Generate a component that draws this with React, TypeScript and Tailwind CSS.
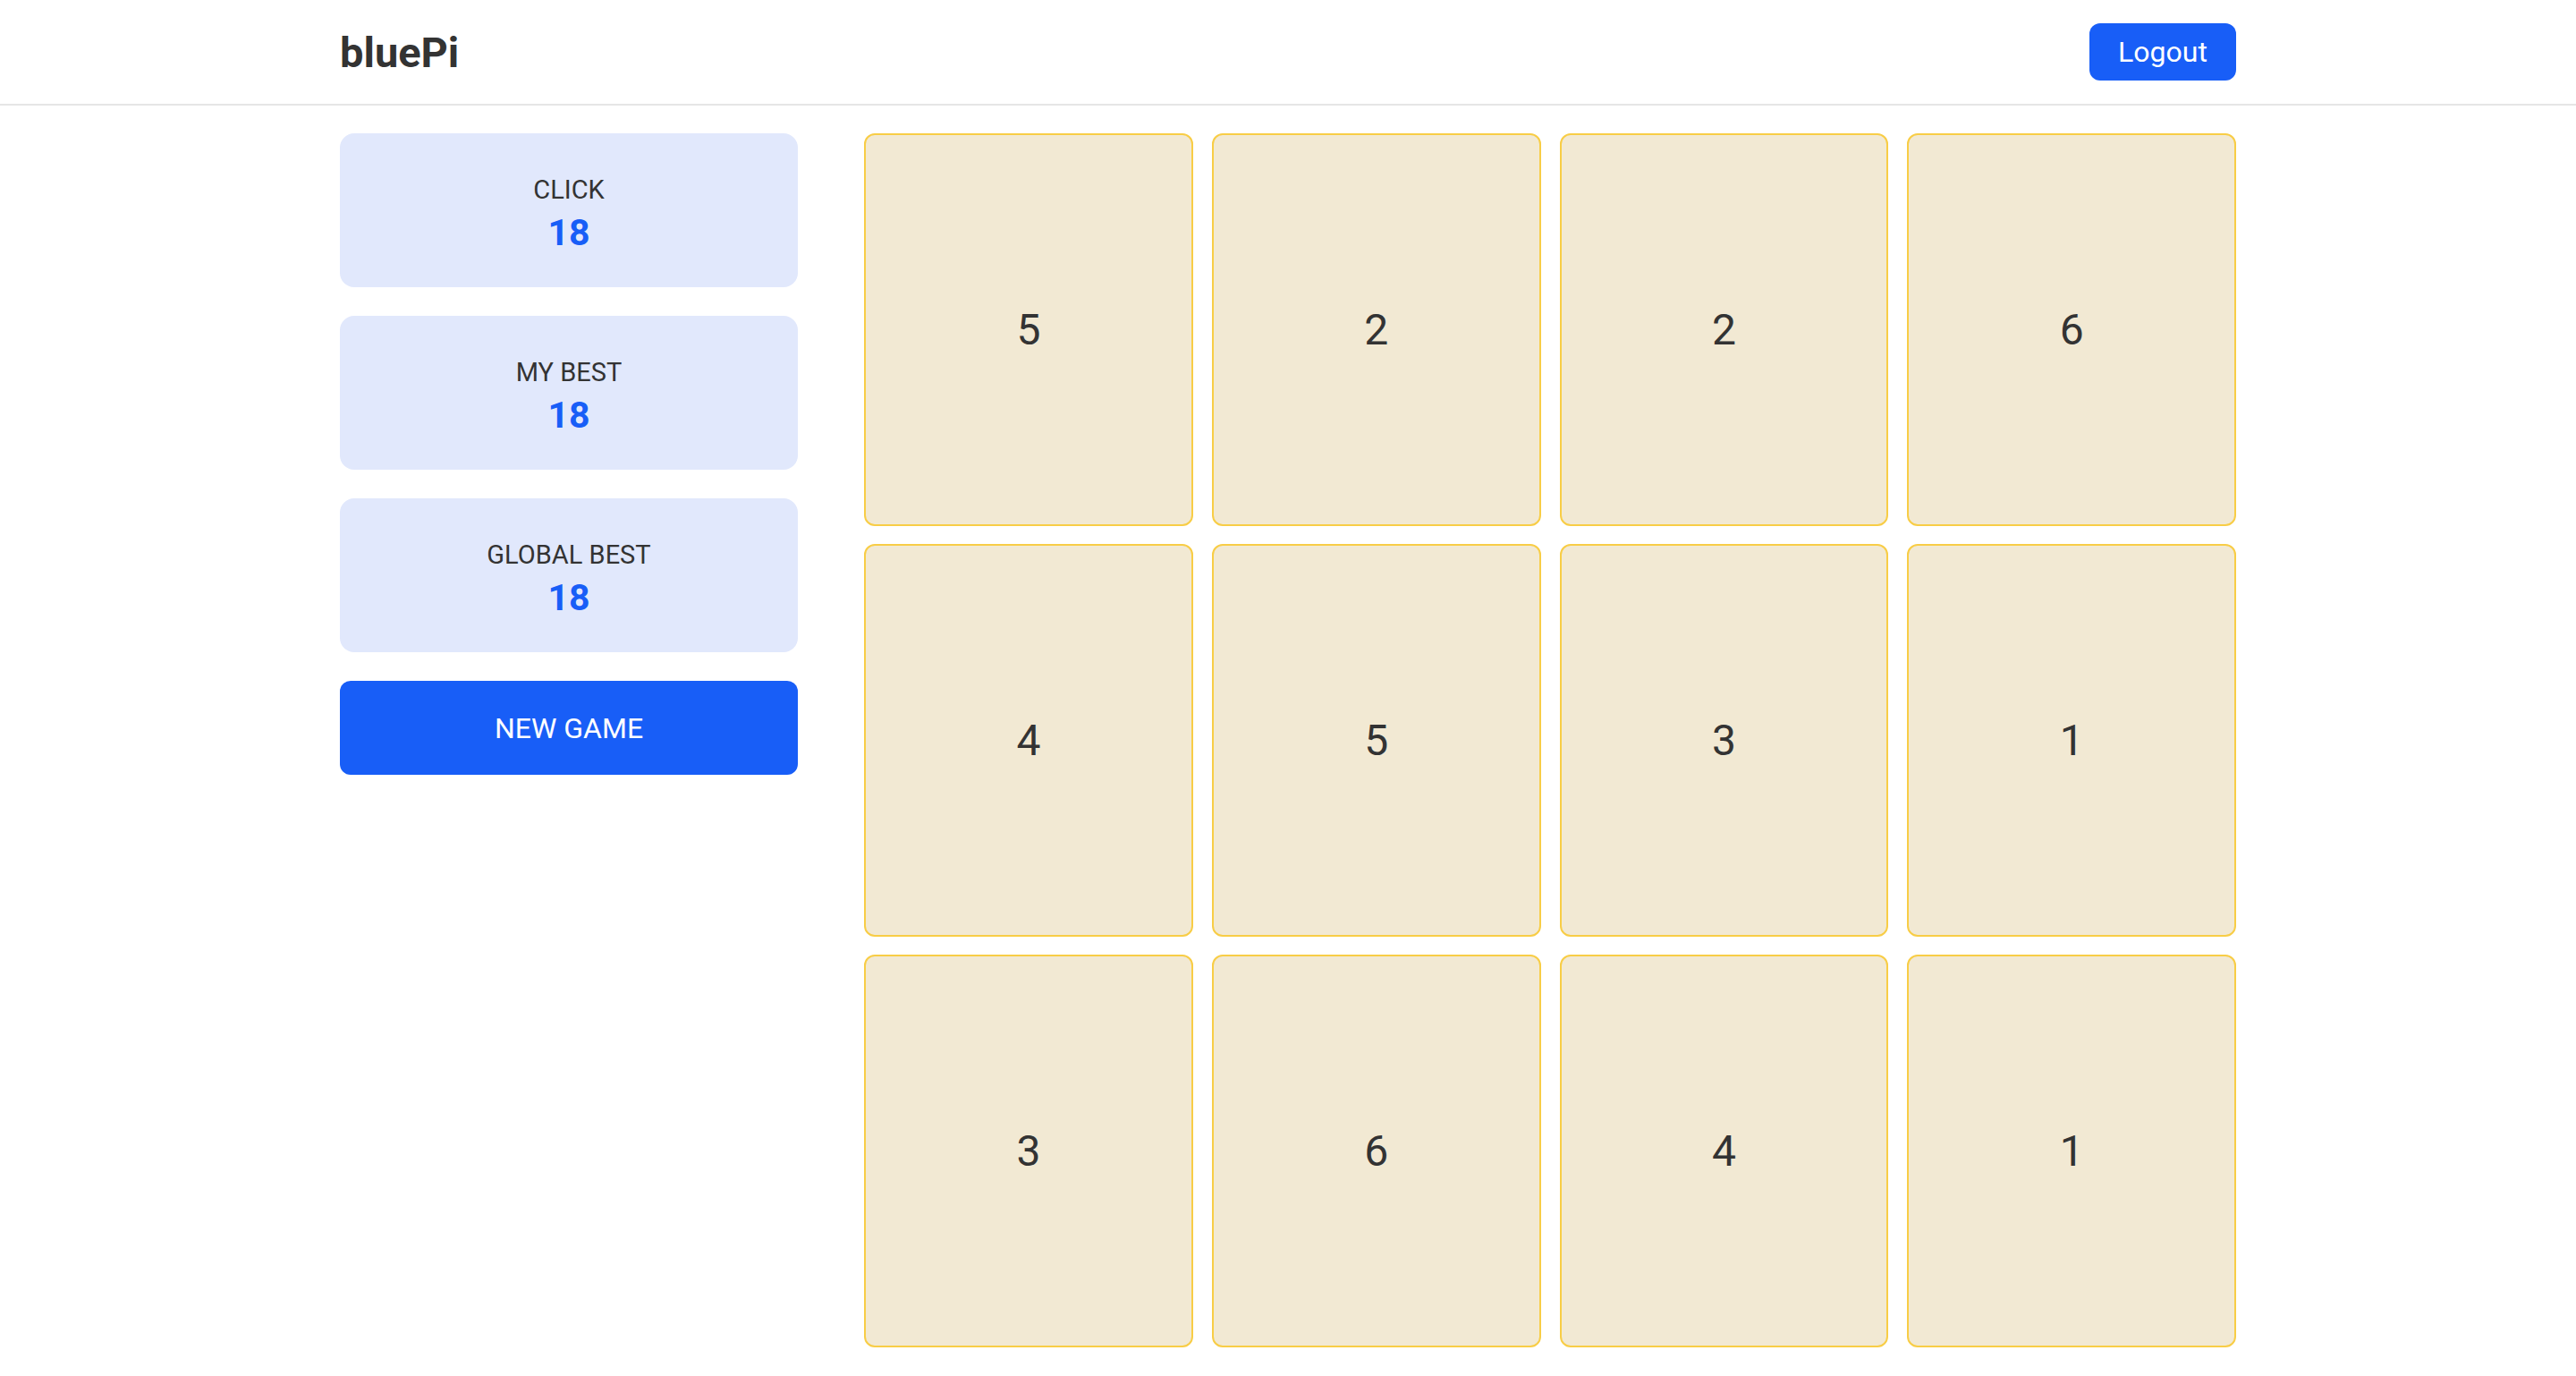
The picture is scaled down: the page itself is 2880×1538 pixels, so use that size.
const tiles = [5, 2, 2, 6, 4, 5, 3, 1, 3, 6, 4, 1];

const stats = [
  { label: "CLICK", value: 18 },
  { label: "MY BEST", value: 18 },
  { label: "GLOBAL BEST", value: 18 },
];

export default function App() {
  return (
    <div className="min-h-screen bg-white text-[#333333] font-['Roboto',sans-serif]">
      <header className="h-[118px] border-b-2 border-[#e6e6e6]">
        <div className="mx-auto flex h-full w-[2120px] items-center justify-between">
          <span className="text-[47px] font-bold leading-none">bluePi</span>
          <button className="h-[64px] w-[164px] rounded-[12px] bg-[#185ef7] text-[32px] text-white">
            Logout
          </button>
        </div>
      </header>

      <main className="mx-auto flex w-[2120px] gap-[74px] pt-[31px]">
        <div className="flex w-[512px] flex-col gap-[32px]">
          {stats.map((s) => (
            <div
              key={s.label}
              className="flex h-[172px] flex-col items-center justify-center rounded-[16px] bg-[#e1e8fc] pt-[10px]"
            >
              <span className="text-[29px] leading-[40px]">{s.label}</span>
              <span className="text-[41px] font-bold leading-[56px] text-[#185ef7]">
                {s.value}
              </span>
            </div>
          ))}
          <button className="h-[105px] rounded-[12px] bg-[#185ef7] text-[32px] text-white">
            NEW GAME
          </button>
        </div>

        <div className="grid flex-1 grid-cols-4 gap-x-[21px] gap-y-[20px]">
          {tiles.map((n, i) => (
            <div
              key={i}
              className="flex h-[439px] items-center justify-center rounded-[12px] border-2 border-[#f8cd46] bg-[#f2e9d3] text-[48px]"
            >
              {n}
            </div>
          ))}
        </div>
      </main>
    </div>
  );
}
